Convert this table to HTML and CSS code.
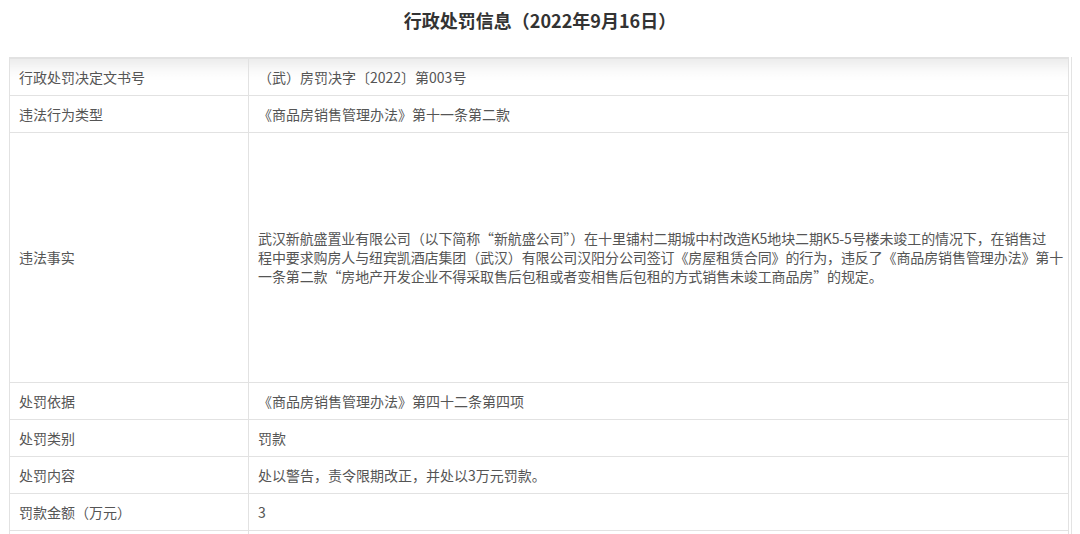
FILE: index.html
```html
<!DOCTYPE html>
<html lang="zh-CN">
<head>
  <meta charset="UTF-8">
  <meta name="viewport" content="width=device-width, initial-scale=1.0">
  <title>行政处罚信息</title>
  <link rel="stylesheet" href="styles.css">
</head>
<body>

  <h2 class="titulo">行政处罚信息（2022年9月16日）</h2>

  <div class="tabla-wrap">
    <table class="tabla">
      <tr class="primera">
        <td class="etiqueta">行政处罚决定文书号</td>
        <td>（武）房罚决字〔2022〕第003号</td>
      </tr>
      <tr>
        <td class="etiqueta">违法行为类型</td>
        <td>《商品房销售管理办法》第十一条第二款</td>
      </tr>
      <tr class="alta">
        <td class="etiqueta">违法事实</td>
        <td>武汉新航盛置业有限公司（以下简称“新航盛公司”）在十里铺村二期城中村改造K5地块二期K5-5号楼未竣工的情况下，在销售过<br>程中要求购房人与纽宾凯酒店集团（武汉）有限公司汉阳分公司签订《房屋租赁合同》的行为，违反了《商品房销售管理办法》第十一条第二款“房地产开发企业不得采取售后包租或者变相售后包租的方式销售未竣工商品房”的规定。</td>
      </tr>
      <tr>
        <td class="etiqueta">处罚依据</td>
        <td>《商品房销售管理办法》第四十二条第四项</td>
      </tr>
      <tr>
        <td class="etiqueta">处罚类别</td>
        <td>罚款</td>
      </tr>
      <tr>
        <td class="etiqueta">处罚内容</td>
        <td>处以警告，责令限期改正，并处以3万元罚款。</td>
      </tr>
      <tr>
        <td class="etiqueta">罚款金额（万元）</td>
        <td>3</td>
      </tr>
      <tr>
        <td class="etiqueta">&nbsp;</td>
        <td>&nbsp;</td>
      </tr>
    </table>
  </div>

</body>
</html>
```

FILE: styles.css
```css
* { box-sizing: border-box; }

body {
  margin: 0;
  padding: 0;
  font-family: "Noto Sans CJK SC", "Noto Sans", sans-serif;
  background: #fff;
  color: #555;
}

.titulo {
  margin: 0;
  height: 57px;
  padding-top: 8px;
  font-size: 18px;
  line-height: 24px;
  font-weight: bold;
  color: #333;
  text-align: center;
}

.tabla-wrap {
  margin: 0 8px 0 9px;
  border-right: 1px solid #e3e3e3;
  padding-right: 2px;
}

.tabla {
  width: 100%;
  border-collapse: collapse;
  border-top: 2px solid #e2e2e2;
  font-size: 14px;
  line-height: 20px;
}

.tabla td {
  border: 1px solid #e2e2e2;
  padding: 8px 2.5px 8px 9px;
  height: 36.5px;
  vertical-align: middle;
}

.tabla td.etiqueta {
  width: 239px;
}

.tabla tr.primera td {
  height: 37px;
  background: linear-gradient(#ececec, #fafafa 35%, #fff 60%);
}

.tabla tr.alta td {
  height: 250px;
  line-height: 19px;
  padding-right: 0;
  letter-spacing: -0.12px;
}
```
